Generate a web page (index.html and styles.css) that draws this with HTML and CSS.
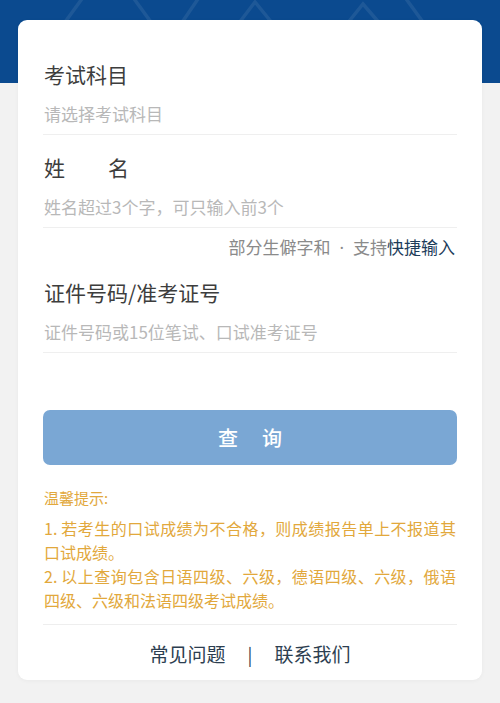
FILE: index.html
```html
<!DOCTYPE html>
<html lang="zh-CN">
<head>
<meta charset="utf-8">
<title>成绩查询</title>
<link rel="stylesheet" href="styles.css">
</head>
<body>
<div class="header">
  <svg class="pattern" width="500" height="83" viewBox="0 0 500 83">
    <g fill="none" stroke="rgba(255,255,255,0.08)" stroke-width="3.5">
      <line x1="52" y1="40" x2="84" y2="-4"/>
      <line x1="132" y1="-4" x2="164" y2="40"/>
      <line x1="170" y1="40" x2="200" y2="-4"/>
      <polyline points="226,40 255,2 286,40"/>
      <polyline points="334,40 363,4 394,40"/>
      <line x1="404" y1="-4" x2="436" y2="40"/>
    </g>
  </svg>
</div>
<main class="card">
  <section class="field">
    <div class="label">考试科目</div>
    <div class="input">请选择考试科目</div>
  </section>
  <section class="field field-next">
    <div class="label label-name"><span>姓</span><span>名</span></div>
    <div class="input">姓名超过3个字，可只输入前3个</div>
  </section>
  <div class="hint">部分生僻字和<span class="dot">·</span>支持<span class="hint-link">快捷输入</span></div>
  <section class="field field-next">
    <div class="label">证件号码/准考证号</div>
    <div class="input">证件号码或15位笔试、口试准考证号</div>
  </section>
  <button class="btn"><span>查</span><span>询</span></button>
  <div class="tips">
    <div class="tips-title">温馨提示:</div>
    <p class="tip">1. 若考生的口试成绩为不合格，则成绩报告单上不报道其口试成绩。</p>
    <p class="tip">2. 以上查询包含日语四级、六级，德语四级、六级，俄语四级、六级和法语四级考试成绩。</p>
  </div>
  <nav class="footer">
    <span class="f-link">常见问题</span>
    <span class="f-sep">|</span>
    <span class="f-link">联系我们</span>
  </nav>
</main>
</body>
</html>
```

FILE: styles.css
```css
* { box-sizing: border-box; }
html, body {
  margin: 0;
  padding: 0;
}
body {
  background: #f2f2f2;
  font-family: "Noto Sans CJK SC", "Noto Sans", sans-serif;
  width: 500px;
  height: 703px;
  overflow: hidden;
}
.header {
  height: 83px;
  background: #0b4a8f;
  overflow: hidden;
}
.pattern { display: block; }
.card {
  margin: -63px 18px 0;
  background: #fff;
  border-radius: 9px;
  box-shadow: 0 1px 4px rgba(0,0,0,0.04);
  padding: 40px 25px 0;
  display: flex;
  flex-direction: column;
}
.field {
  border-bottom: 1px solid #efefef;
  padding-bottom: 8px;
}
.field-next { padding-top: 18px; }
.label {
  font-size: 21px;
  line-height: 28px;
  color: #3d3d3d;
  padding-left: 1px;
}
.label-name {
  display: flex;
  gap: 43px;
}
.input {
  margin-top: 14px;
  font-size: 17px;
  line-height: 24px;
  color: #b8b8b8;
  padding-left: 1px;
}
.hint {
  margin-top: 7px;
  font-size: 17px;
  line-height: 24px;
  color: #8a8a8a;
  text-align: right;
  padding-right: 2px;
}
.dot {
  font-family: "Noto Sans", sans-serif;
  margin: 0 9px;
}
.hint-link { color: #1c3c5a; }
.btn {
  margin-top: 57px;
  height: 55px;
  border: none;
  border-radius: 7px;
  background: #7aa7d4;
  color: #fff;
  font-family: inherit;
  font-size: 20px;
  font-weight: 500;
  display: flex;
  justify-content: center;
  align-items: center;
  gap: 24px;
  padding: 0;
}
.tips {
  margin-top: 21px;
  color: #e2a83c;
  padding: 0 1px 12px;
  border-bottom: 1px solid #eeeeee;
}
.tips-title {
  font-size: 15px;
  line-height: 24px;
}
.tip {
  margin: 0;
  font-size: 16px;
  line-height: 24px;
  text-align: justify;
}
.tips-title + .tip { margin-top: 6px; }
.footer {
  display: flex;
  justify-content: center;
  align-items: center;
  gap: 22px;
  padding: 15px 0 12px;
  font-size: 19px;
  line-height: 28px;
  color: #2c3e50;
}
.f-sep { font-size: 18px; }
```
